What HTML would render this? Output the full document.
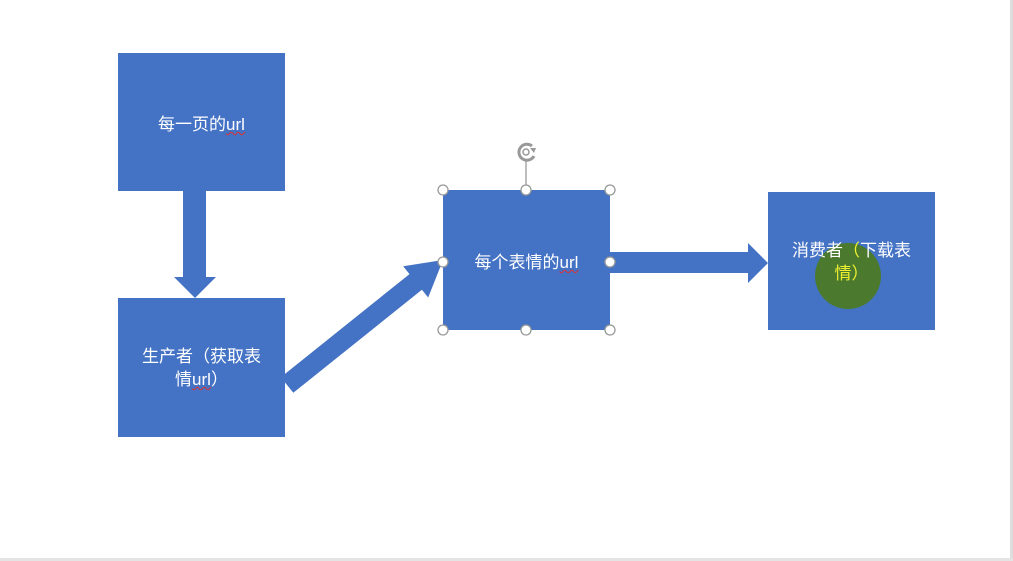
<!DOCTYPE html>
<html><head><meta charset="utf-8"><style>
html,body{margin:0;padding:0}
body{width:1013px;height:561px;background:#fff;position:relative;overflow:hidden;font-family:"Liberation Sans","Noto Sans CJK SC",sans-serif}
.b{position:absolute;background:#4472c4;color:#fff;font-size:17px;text-align:center;line-height:23px;box-sizing:border-box}
.t{position:absolute;left:0;right:0}
.u{text-decoration:underline wavy #e03030;text-decoration-thickness:1px}
</style></head><body>
<div style="position:absolute;right:0;top:0;width:3px;height:561px;background:#ddd"></div>
<div style="position:absolute;left:0;bottom:0;width:1013px;height:3px;background:#e4e4e4"></div>
<svg width="1013" height="561" style="position:absolute;left:0;top:0">
<polygon fill="#4472c4" points="183,191 206,191 206,277 216,277 195,298 174,277 183,277"/>
<polygon fill="#4472c4" points="610,252 748,252 748,243 768,263 748,283 748,273 610,273"/>
<polygon fill="#4472c4" points="280.8,377.2 409.5,274.1 403.2,266.3 443,260 428.2,297.5 421.9,289.7 293.3,392.8"/>
</svg>
<div class="b" style="left:118px;top:53px;width:167px;height:138px"><div class="t" style="top:60px">每一页的<span class="u">url</span></div></div>
<div class="b" style="left:118px;top:298px;width:167px;height:139px"><div class="t" style="top:47px;padding:0 17px">生产者（获取表情<span class="u">url</span>）</div></div>
<div class="b" style="left:443px;top:190px;width:167px;height:140px"><div class="t" style="top:61px">每个表情的<span class="u">url</span></div></div>
<div class="b" style="left:768px;top:192px;width:167px;height:138px">
<div style="position:absolute;left:47px;top:51px;width:66px;height:66px;border-radius:50%;background:#4b7a2e"></div>
<div class="t" style="top:47px;padding:0 14px">消费者<span style="color:#f0f030">（</span>下载表<span style="color:#f0f030">情）</span></div></div>
<svg width="1013" height="561" style="position:absolute;left:0;top:0">
<g fill="#fff" stroke="#999" stroke-width="1.3">
<line x1="526" y1="160" x2="526" y2="190" stroke="#999"/>
<circle cx="443" cy="190" r="5"/><circle cx="526" cy="190" r="5"/><circle cx="610" cy="190" r="5"/>
<circle cx="443" cy="262" r="5"/><circle cx="610" cy="262" r="5"/>
<circle cx="443" cy="330" r="5"/><circle cx="526" cy="330" r="5"/><circle cx="610" cy="330" r="5"/>
</g>
<path d="M532,146 A8,8 0 1 0 534,156" fill="none" stroke="#999" stroke-width="3"/>
<path d="M530,148 l6,0 l-2,5 z" fill="#999"/>
<circle cx="526" cy="152" r="3" fill="none" stroke="#999" stroke-width="1.5"/>
</svg>
</body></html>
